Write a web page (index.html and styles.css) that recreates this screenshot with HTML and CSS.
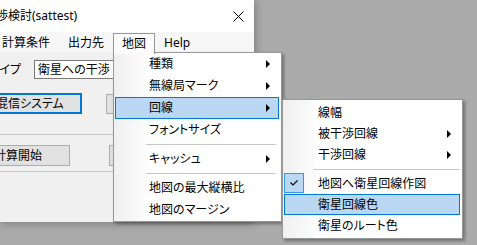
FILE: index.html
```html
<!DOCTYPE html>
<html lang="ja">
<head>
  <meta charset="UTF-8" />
  <meta name="viewport" content="width=device-width, initial-scale=1.0" />
  <title>干渉検討(sattest)</title>
  <link rel="stylesheet" href="styles.css">
</head>
<body>
  <div class="window">
    <div class="titlebar">
      <span class="title">干渉検討(sattest)</span>
      <svg class="close" width="11" height="11" viewBox="0 0 11 11">
        <path d="M0.5 0.5 L10.5 10.5 M10.5 0.5 L0.5 10.5" stroke="#000" stroke-width="1" fill="none" />
      </svg>
    </div>
    <div class="menubar">
      <span class="menu-item">計算条件</span>
      <span class="menu-item">出力先</span>
      <span class="menu-item open">地図</span>
      <span class="menu-item">Help</span>
    </div>
    <div class="client">
      <div class="row type-row">
        <span class="label">タイプ</span>
        <div class="textbox">衛星への干渉</div>
      </div>
      <div class="row btn-row">
        <button class="btn default wide">混信システム</button>
        <button class="btn side"></button>
      </div>
      <div class="sep"></div>
      <div class="row btn-row second">
        <button class="btn start">計算開始</button>
        <button class="btn side"></button>
      </div>
      <div class="sep low"></div>
    </div>
  </div>

  <ul class="dropdown main-menu">
    <li class="item has-sub">種類</li>
    <li class="item has-sub">無線局マーク</li>
    <li class="item has-sub hot">回線</li>
    <li class="item">フォントサイズ</li>
    <li class="divider"></li>
    <li class="item has-sub">キャッシュ</li>
    <li class="divider"></li>
    <li class="item">地図の最大縦横比</li>
    <li class="item">地図のマージン</li>
  </ul>

  <ul class="dropdown sub-menu">
    <li class="item">線幅</li>
    <li class="item has-sub">被干渉回線</li>
    <li class="item has-sub">干渉回線</li>
    <li class="divider"></li>
    <li class="item checked">
      <span class="check">
        <svg width="8" height="6" viewBox="0 0 8 6">
          <path d="M0.5 2.5 L3 5 L7.5 0.5" stroke="#000" stroke-width="1.2" fill="none" />
        </svg>
      </span>
      地図へ衛星回線作図
    </li>
    <li class="item hot">衛星回線色</li>
    <li class="item">衛星のルート色</li>
  </ul>
</body>
</html>
```

FILE: styles.css
```css
body {
  margin: 0;
  width: 477px;
  height: 245px;
  overflow: hidden;
  position: relative;
  background: #ababab;
  font-family: "Noto Sans", "Noto Sans CJK JP", sans-serif;
  font-size: 12px;
  font-feature-settings: "palt";
  color: #000;
}

.window {
  width: 254px;
  height: 222px;
  display: flex;
  flex-direction: column;
  background: #f0f0f0;
  box-shadow: 1px 1px 9px rgba(0,0,0,0.3);
}

.titlebar {
  height: 32px;
  background: #fff;
  display: flex;
  align-items: center;
  justify-content: space-between;
}

.title {
  margin-left: -16px;
  line-height: 16px;
  white-space: nowrap;
}

.close {
  margin-right: 10px;
}

.menubar {
  height: 20px;
  background: #f7f7f7;
  display: flex;
}

.menu-item {
  padding: 0 9px;
  margin-top: 1px;
  line-height: 19px;
  white-space: nowrap;
}

.menu-item:first-child {
  margin-left: -7px;
}

.menu-item.open {
  position: relative;
  z-index: 3;
  height: 20px;
  padding: 0 8px;
  background: #fcfcfc;
  border: 1px solid #979797;
  border-bottom: none;
  box-sizing: border-box;
  height: 21px;
}

.client {
  flex: 1;
  padding-top: 8px;
}

.row {
  display: flex;
  align-items: center;
}

.label {
  width: 45px;
  margin-left: -11px;
  line-height: 19px;
  white-space: nowrap;
}

.textbox {
  width: 110px;
  height: 19px;
  box-sizing: border-box;
  border: 1px solid #7a7a7a;
  background: #fff;
  padding-left: 3px;
  line-height: 17px;
  white-space: nowrap;
}

.btn-row {
  margin-top: 14px;
  align-items: flex-start;
}

.btn {
  height: 21px;
  box-sizing: border-box;
  background: #e1e1e1;
  border: 1px solid #adadad;
  font: inherit;
  font-feature-settings: "palt";
  padding: 0;
  text-align: left;
  line-height: 18px;
  white-space: nowrap;
}

.btn.default {
  border: 2px solid #0078d7;
  line-height: 17px;
}

.btn.wide {
  width: 112px;
  margin-left: -30px;
  padding-left: 24px;
}

.btn-row .side {
  width: 60px;
  height: 20px;
  margin-top: 1px;
  margin-left: 24px;
}

.btn.start {
  width: 100px;
  margin-left: -30px;
  padding-left: 23px;
}

.second {
  margin-top: 10px;
}

.second .side {
  margin-top: 0;
  height: 21px;
  margin-left: 39px;
}

.sep {
  width: 200px;
  height: 1px;
  margin-top: 20px;
  background: #c4c4c4;
}

.sep.low {
  margin-top: 5px;
}

/* menus */

.dropdown {
  position: absolute;
  z-index: 2;
  list-style: none;
  margin: 0;
  box-sizing: border-box;
  border: 1px solid #979797;
  background: linear-gradient(to right, #f0f0f0 0, #fbfbfb 30px, #fff 32px);
  box-shadow: 2px 2px 3px rgba(0,0,0,0.35);
}

.main-menu {
  left: 113px;
  top: 52px;
  width: 169px;
  height: 170px;
  padding: 0;
}

.sub-menu {
  left: 282px;
  top: 99px;
  width: 181px;
  height: 140px;
  padding: 2px 0;
}

.item {
  position: relative;
  height: 22px;
  line-height: 22px;
  margin: 0 2px 0 1px;
  padding-left: 34px;
  white-space: nowrap;
}

.sub-menu .item {
  height: 21px;
  line-height: 21px;
}

.item.hot {
  background: #bad8f4;
  outline: 1px solid #0078d7;
  outline-offset: -1px;
}

.has-sub::after {
  content: "";
  position: absolute;
  right: 9px;
  top: 50%;
  margin-top: -4px;
  border-left: 4px solid #000;
  border-top: 4px solid transparent;
  border-bottom: 4px solid transparent;
}

.divider {
  position: relative;
  height: 7px;
}

.divider::before {
  content: "";
  position: absolute;
  left: 32px;
  right: 5px;
  top: 3px;
  height: 1px;
  background: #c8c8c8;
}

.sub-menu .divider {
  height: 8px;
}

.sub-menu .divider::before {
  left: 30px;
  right: 2px;
  top: 4px;
}

.check {
  position: absolute;
  left: 0;
  top: 0;
  width: 20px;
  height: 20px;
  box-sizing: border-box;
  border: 1px solid #3d95e0;
  background: #bad8f4;
  display: flex;
  align-items: center;
  justify-content: center;
}
```
